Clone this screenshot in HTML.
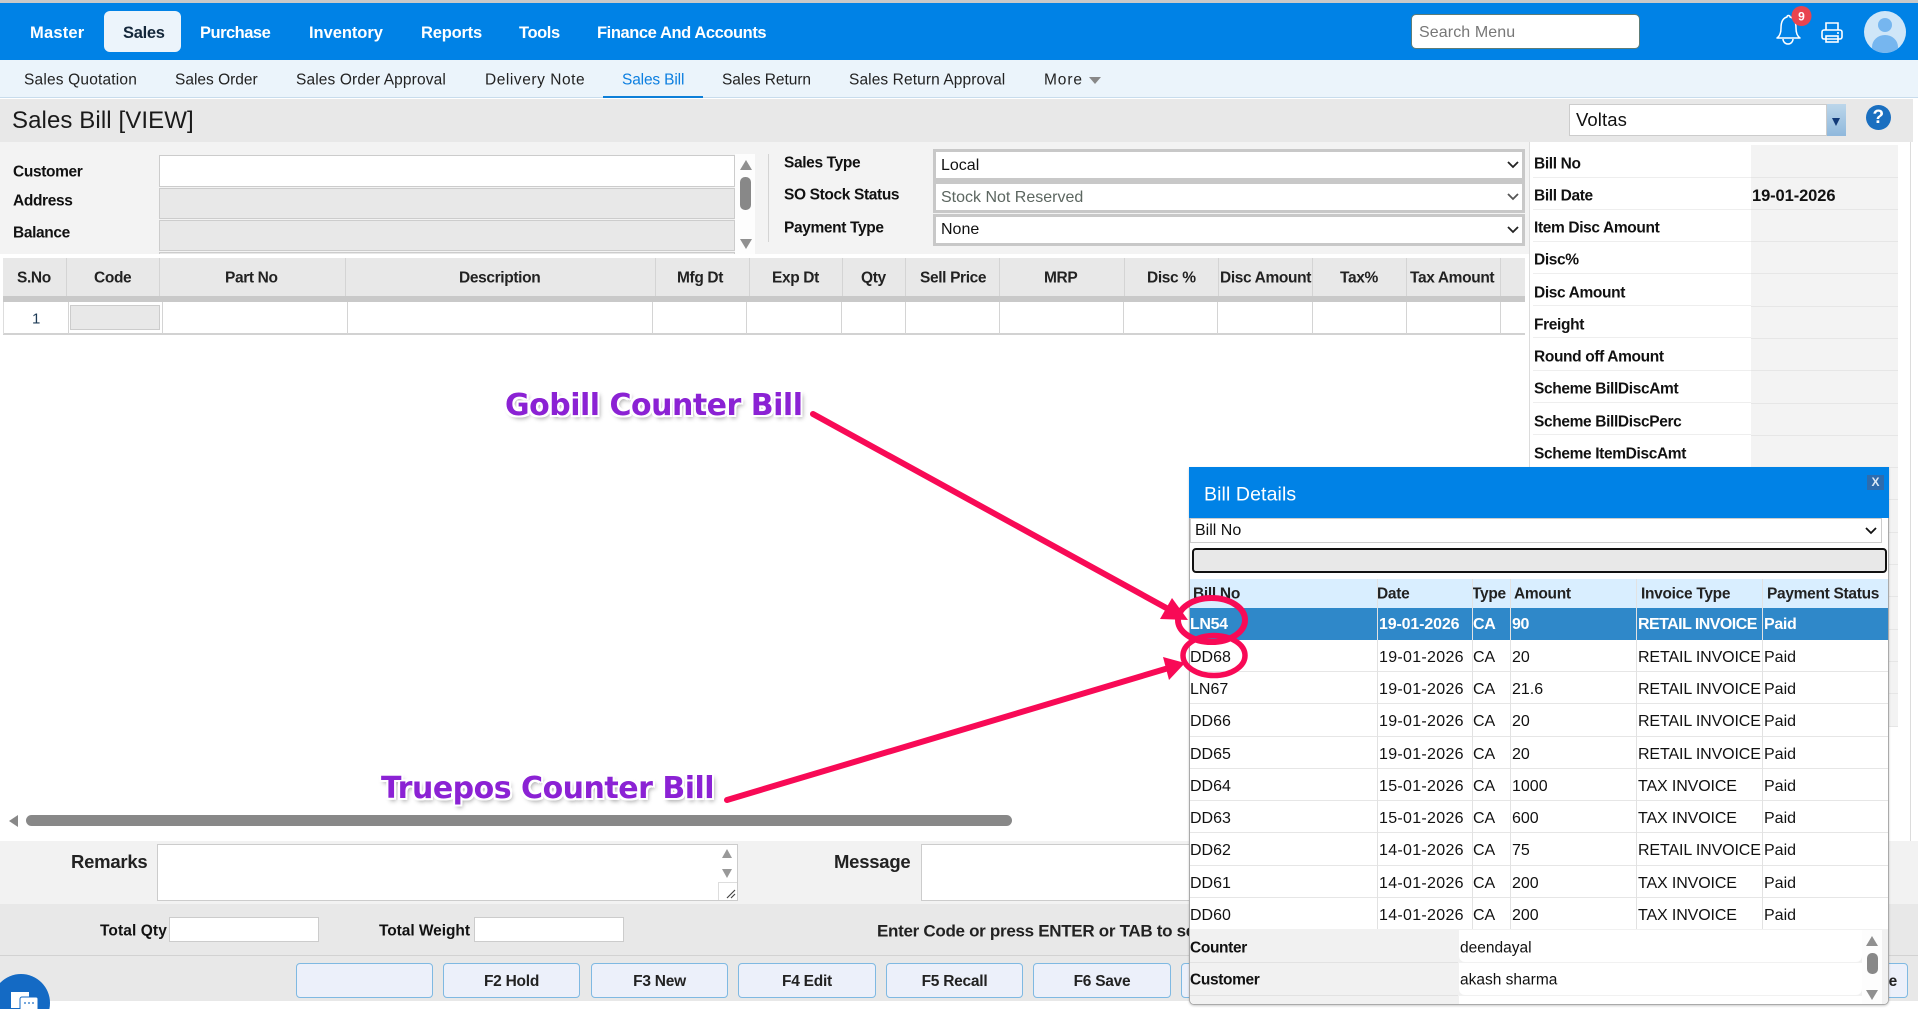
<!DOCTYPE html>
<html lang="en"><head><meta charset="utf-8"><title>Sales Bill</title>
<style>
html,body{margin:0;padding:0;width:1918px;height:1009px;overflow:hidden;background:#fff}
body{position:relative;font-family:"Liberation Sans",sans-serif;color:#111}
div,span{box-sizing:border-box}
.b{position:absolute}
.t{position:absolute;white-space:nowrap;line-height:1;transform:translateY(-50%)}
.nav{color:#fff;font-weight:bold;font-size:16.5px;top:33px}
.sub{font-size:15.5px;top:80px;color:#222;letter-spacing:.2px}
.lab{font-weight:bold;font-size:15.5px;letter-spacing:-.36px;color:#111}
.th{font-weight:bold;font-size:15.5px;top:278px;letter-spacing:-.36px;color:#222}
.vl{position:absolute;width:1px;background:#d4d4d4}
.inp{position:absolute;background:#fff;border:1px solid #ccc}
.sel{position:absolute;left:933px;width:592px;height:32px;background:#fff;border:3px solid #c8c8c8;font-size:16px;line-height:27px;padding-left:5px}
.chev{position:absolute}
.rl{position:absolute;left:1533px;width:218px;height:31px;background:#fff;border-bottom:1px solid #eee}
.rv{position:absolute;left:1751px;width:147px;height:31px;background:#f3f3f3;border-bottom:1px solid #e6e6e6}
.btn{position:absolute;top:963px;height:35px;background:#ecf0fa;border:1px solid #7fb9e2;border-radius:4px;text-align:center;font-weight:bold;font-size:15.5px;letter-spacing:-.25px;line-height:35px;color:#222}
.row{position:absolute;left:1190px;width:698px;height:32px;border-bottom:1px solid #e6e6e6;background:#fff;font-size:16px;color:#111}
.row span{position:absolute;top:9px;white-space:nowrap;line-height:18px}
.row .c1{left:0}.row .c2{left:189px;letter-spacing:.3px}.row .c3{left:283px}.row .c4{left:322px}.row .c5{left:448px;letter-spacing:-.12px}.row .c6{left:574px}
.row.s{background:#2f88c9;color:#fff;font-weight:bold;font-size:16px;letter-spacing:-.35px;border-bottom:0}
.row.s span{top:8px}
.row.s .c2{letter-spacing:-.15px}.row.s .c5{letter-spacing:-.55px}
.mh{position:absolute;top:594px;font-weight:bold;font-size:15.5px;color:#222;white-space:nowrap;line-height:1;transform:translateY(-50%);letter-spacing:-.3px}
.ann{position:absolute;white-space:nowrap;line-height:1;font-family:"DejaVu Sans",sans-serif;font-weight:bold;color:#8b22d4;font-size:30px;letter-spacing:-.5px;text-shadow:-2px 0 0 #fff,2px 0 0 #fff,0 -2px 0 #fff,0 2px 0 #fff,-2px -2px 0 #fff,2px -2px 0 #fff,-2px 2px 0 #fff,2px 2px 0 #fff,2px 3px 5px #999}
</style></head><body>

<!-- top bars -->
<div class="b" style="left:0;top:0;width:1918px;height:3px;background:#c9c9c9"></div>
<div class="b" style="left:0;top:3px;width:1918px;height:57px;background:#0082e6"></div>
<div class="b" style="left:104px;top:11px;width:77px;height:41px;background:#ecf4fb;border-radius:6px"></div>
<span class="t nav" style="left:30px;letter-spacing:.2px">Master</span>
<span class="t nav" style="left:123px;color:#14273a;letter-spacing:-.3px">Sales</span>
<span class="t nav" style="left:200px;letter-spacing:-.5px">Purchase</span>
<span class="t nav" style="left:309px;letter-spacing:-.05px">Inventory</span>
<span class="t nav" style="left:421px;letter-spacing:-.2px">Reports</span>
<span class="t nav" style="left:519px;letter-spacing:-.4px">Tools</span>
<span class="t nav" style="left:597px;letter-spacing:-.42px">Finance And Accounts</span>

<div class="b" style="left:1411px;top:14px;width:229px;height:35px;background:#fff;border:1px solid #5d7d78;border-radius:5px"></div>
<span class="t" style="left:1419px;top:33px;font-size:16px;color:#777;letter-spacing:.1px">Search Menu</span>
<svg class="b" style="left:1772px;top:5px" width="40" height="40" viewBox="0 0 40 40"><path d="M5 33c3-2 4-5 4-10 0-6 2-10 6-11 0-2 3-2 3 0 4 1 6 5 6 11 0 5 1 8 4 10z" fill="none" stroke="#fff" stroke-width="1.5" stroke-linejoin="round"/><path d="M11 33a4 4 0 0 0 10 0" fill="none" stroke="#fff" stroke-width="1.5" transform="translate(0,1)"/><circle cx="29.500" cy="11" r="10" fill="#e8444f"/><text x="29.500" y="15.500" text-anchor="middle" font-size="12" font-weight="bold" fill="#fff" font-family="Liberation Sans">9</text></svg>
<svg class="b" style="left:1820px;top:21px" width="24" height="24" viewBox="0 0 24 24" fill="none" stroke="#fff" stroke-width="1.6"><path d="M6 9V2h12v7"/><rect x="2" y="9" width="20" height="9" rx="2"/><rect x="6" y="15" width="12" height="6"/><path d="M17 12h2"/></svg>
<svg class="b" style="left:1864px;top:11px" width="42" height="42" viewBox="0 0 42 42"><defs><clipPath id="av"><circle cx="21" cy="21" r="21"/></clipPath></defs><circle cx="21" cy="21" r="21" fill="#cfe6f8"/><g clip-path="url(#av)" fill="#76b6ef"><circle cx="21" cy="14" r="7"/><ellipse cx="21" cy="36" rx="13" ry="12"/></g></svg>

<div class="b" style="left:0;top:60px;width:1918px;height:38px;background:#ebf4fb;border-bottom:1px solid #c8dcec"></div>
<span class="t sub" style="left:24px;letter-spacing:.18px">Sales Quotation</span>
<span class="t sub" style="left:175px;letter-spacing:0">Sales Order</span>
<span class="t sub" style="left:296px;letter-spacing:.13px">Sales Order Approval</span>
<span class="t sub" style="left:485px;letter-spacing:.55px">Delivery Note</span>
<span class="t sub" style="left:622px;color:#0d7fe0;letter-spacing:-.15px">Sales Bill</span>
<div class="b" style="left:603px;top:96px;width:100px;height:2px;background:#0d7fd8"></div>
<span class="t sub" style="left:722px;letter-spacing:-.05px">Sales Return</span>
<span class="t sub" style="left:849px;letter-spacing:.1px">Sales Return Approval</span>
<span class="t sub" style="left:1044px;letter-spacing:.9px">More</span>
<div class="b" style="left:1089px;top:77px;width:0;height:0;border-left:6.5px solid transparent;border-right:6.5px solid transparent;border-top:7px solid #888"></div>

<!-- title bar -->
<div class="b" style="left:0;top:99px;width:1913px;height:43px;background:#e8e8e8"></div>
<span class="t" style="left:12px;top:121px;font-size:24px;color:#1a1a1a;letter-spacing:.1px">Sales Bill [VIEW]</span>
<div class="b" style="left:1569px;top:104px;width:258px;height:32px;background:#fff;border:1px solid #ccc"></div>
<span class="t" style="left:1576px;top:120px;font-size:18.5px;color:#111;letter-spacing:.1px">Voltas</span>
<div class="b" style="left:1827px;top:104px;width:19px;height:32px;background:linear-gradient(#bcd6ea,#8fb8dc)"></div>
<div class="b" style="left:1832px;top:118px;width:0;height:0;border-left:4.5px solid transparent;border-right:4.5px solid transparent;border-top:8px solid #123a78"></div>
<div class="b" style="left:1866px;top:105px;width:24.5px;height:25px;border-radius:50%;background:#1a6fc0;color:#fff;text-align:center;font-weight:bold;font-size:19px;line-height:25px">?</div>

<!-- form -->
<div class="b" style="left:0;top:142px;width:1529px;height:112px;background:#f3f3f3"></div>
<span class="t lab" style="left:13px;top:172px">Customer</span>
<span class="t lab" style="left:13px;top:201px">Address</span>
<span class="t lab" style="left:13px;top:233px">Balance</span>
<div class="inp" style="left:159px;top:155px;width:576px;height:32px"></div>
<div class="inp" style="left:159px;top:188px;width:576px;height:31px;background:#e8e8e8"></div>
<div class="inp" style="left:159px;top:220px;width:576px;height:31px;background:#e8e8e8"></div>
<div class="inp" style="left:159px;top:252px;width:576px;height:2px;background:#e8e8e8;border-bottom:0"></div>
<div class="b" style="left:735px;top:154px;width:20px;height:100px;background:#fdfdfd"></div>
<div class="b" style="left:740px;top:160px;width:0;height:0;border-left:6px solid transparent;border-right:6px solid transparent;border-bottom:10px solid #909090"></div>
<div class="b" style="left:740px;top:177px;width:11px;height:33px;border-radius:5px;background:#888"></div>
<div class="b" style="left:740px;top:239px;width:0;height:0;border-left:6px solid transparent;border-right:6px solid transparent;border-top:10px solid #909090"></div>
<div class="vl" style="left:768px;top:154px;height:88px"></div>
<span class="t lab" style="left:784px;top:163px">Sales Type</span>
<span class="t lab" style="left:784px;top:195px">SO Stock Status</span>
<span class="t lab" style="left:784px;top:228px">Payment Type</span>
<div class="sel" style="top:149px">Local<svg class="chev" style="right:3px;top:9px" width="12" height="8" viewBox="0 0 12 8"><path d="M1 1l5 5 5-5" fill="none" stroke="#222" stroke-width="1.8"/></svg></div>
<div class="sel" style="top:181px;color:#5c6660">Stock Not Reserved<svg class="chev" style="right:3px;top:9px" width="12" height="8" viewBox="0 0 12 8"><path d="M1 1l5 5 5-5" fill="none" stroke="#555" stroke-width="1.8"/></svg></div>
<div class="sel" style="top:214px;line-height:26px">None<svg class="chev" style="right:3px;top:9px" width="12" height="8" viewBox="0 0 12 8"><path d="M1 1l5 5 5-5" fill="none" stroke="#222" stroke-width="1.8"/></svg></div>

<!-- grid -->
<div class="b" style="left:3px;top:258px;width:1522px;height:38px;background:#e8e8e8"></div>
<div class="b" style="left:3px;top:296px;width:1522px;height:6px;background:#c9c9c9"></div>
<div class="b" style="left:3px;top:333px;width:1522px;height:2px;background:#d2d2d2"></div>
<div class="b" style="left:3px;top:302px;width:1px;height:32px;background:#ddd"></div>
<div class="vl" style="left:66px;top:258px;height:38px"></div><div class="vl" style="left:159px;top:258px;height:38px"></div><div class="vl" style="left:345px;top:258px;height:38px"></div><div class="vl" style="left:655px;top:258px;height:38px"></div><div class="vl" style="left:749px;top:258px;height:38px"></div><div class="vl" style="left:842px;top:258px;height:38px"></div><div class="vl" style="left:905px;top:258px;height:38px"></div><div class="vl" style="left:999px;top:258px;height:38px"></div><div class="vl" style="left:1124px;top:258px;height:38px"></div><div class="vl" style="left:1218px;top:258px;height:38px"></div><div class="vl" style="left:1312px;top:258px;height:38px"></div><div class="vl" style="left:1406px;top:258px;height:38px"></div><div class="vl" style="left:1500px;top:258px;height:38px"></div>
<div class="vl" style="left:68px;top:302px;height:32px"></div><div class="vl" style="left:162px;top:302px;height:32px"></div><div class="vl" style="left:347px;top:302px;height:32px"></div><div class="vl" style="left:652px;top:302px;height:32px"></div><div class="vl" style="left:746px;top:302px;height:32px"></div><div class="vl" style="left:841px;top:302px;height:32px"></div><div class="vl" style="left:905px;top:302px;height:32px"></div><div class="vl" style="left:999px;top:302px;height:32px"></div><div class="vl" style="left:1123px;top:302px;height:32px"></div><div class="vl" style="left:1217px;top:302px;height:32px"></div><div class="vl" style="left:1312px;top:302px;height:32px"></div><div class="vl" style="left:1406px;top:302px;height:32px"></div><div class="vl" style="left:1500px;top:302px;height:32px"></div>
<span class="t th" style="left:17px">S.No</span><span class="t th" style="left:94px">Code</span><span class="t th" style="left:225px">Part No</span><span class="t th" style="left:459px">Description</span><span class="t th" style="left:677px">Mfg Dt</span><span class="t th" style="left:772px">Exp Dt</span><span class="t th" style="left:861px">Qty</span><span class="t th" style="left:920px">Sell Price</span><span class="t th" style="left:1044px">MRP</span><span class="t th" style="left:1147px">Disc %</span><span class="t th" style="left:1220px">Disc Amount</span><span class="t th" style="left:1340px">Tax%</span><span class="t th" style="left:1410px">Tax Amount</span>
<span class="t" style="left:32px;top:319px;font-size:15px;color:#1d3a55">1</span>
<div class="b" style="left:70px;top:305px;width:90px;height:25px;background:#e8e8e8;border:1px solid #ccc"></div>

<!-- right panel -->
<div class="b" style="left:1529px;top:142px;width:382px;height:762px;background:#fff;border:1px solid #dcdcdc;border-top:0"></div>
<div class="rl" style="top:147px"></div><div class="rv" style="top:145px;height:33px"></div>
<div class="rl" style="top:179px"></div><div class="rv" style="top:178px;height:32px"></div>
<div class="rl" style="top:211px"></div><div class="rv" style="top:210px;height:32px"></div>
<div class="rl" style="top:243px"></div><div class="rv" style="top:242px;height:32px"></div>
<div class="rl" style="top:275px"></div><div class="rv" style="top:274px;height:33px"></div>
<div class="rl" style="top:307px"></div><div class="rv" style="top:307px;height:32px"></div>
<div class="rl" style="top:340px"></div><div class="rv" style="top:339px;height:32px"></div>
<div class="rl" style="top:372px"></div><div class="rv" style="top:371px;height:33px"></div>
<div class="rl" style="top:404px"></div><div class="rv" style="top:404px;height:32px"></div>
<div class="rl" style="top:437px"></div><div class="rv" style="top:436px;height:32px"></div>
<div class="rv" style="top:468px;height:32px"></div><div class="rv" style="top:500px;height:33px"></div><div class="rv" style="top:533px;height:32px"></div><div class="rv" style="top:565px;height:32px"></div><div class="rv" style="top:597px;height:33px"></div><div class="rv" style="top:630px;height:32px"></div><div class="rv" style="top:662px;height:32px"></div><div class="rv" style="top:694px;height:33px"></div>
<span class="t lab" style="left:1534px;top:164px">Bill No</span>
<span class="t lab" style="left:1534px;top:196px">Bill Date</span>
<span class="t lab" style="left:1752px;top:196px;font-size:16.5px;letter-spacing:-.1px">19-01-2026</span>
<span class="t lab" style="left:1534px;top:228px">Item Disc Amount</span>
<span class="t lab" style="left:1534px;top:260px">Disc%</span>
<span class="t lab" style="left:1534px;top:293px">Disc Amount</span>
<span class="t lab" style="left:1534px;top:325px">Freight</span>
<span class="t lab" style="left:1534px;top:357px">Round off Amount</span>
<span class="t lab" style="left:1534px;top:389px">Scheme BillDiscAmt</span>
<span class="t lab" style="left:1534px;top:422px">Scheme BillDiscPerc</span>
<span class="t lab" style="left:1534px;top:454px">Scheme ItemDiscAmt</span>

<!-- h scrollbar -->
<div class="b" style="left:9px;top:815px;width:0;height:0;border-top:6px solid transparent;border-bottom:6px solid transparent;border-right:9px solid #888"></div>
<div class="b" style="left:26px;top:815px;width:986px;height:11px;background:#888;border-radius:6px"></div>

<!-- remarks -->
<div class="b" style="left:0;top:841px;width:1918px;height:63px;background:#f2f2f2"></div>
<span class="t" style="left:71px;top:862px;font-size:18.5px;font-weight:bold;letter-spacing:-.25px;color:#222">Remarks</span>
<div class="inp" style="left:157px;top:844px;width:581px;height:57px"></div>
<div class="b" style="left:722px;top:849px;width:0;height:0;border-left:5.5px solid transparent;border-right:5.5px solid transparent;border-bottom:9px solid #999"></div>
<div class="b" style="left:722px;top:869px;width:0;height:0;border-left:5.5px solid transparent;border-right:5.5px solid transparent;border-top:9px solid #999"></div>
<div class="b" style="left:718px;top:882px;width:19px;height:18px;background:#fff;border-left:1px solid #ddd;border-top:1px solid #ddd"></div>
<svg class="b" style="left:725px;top:888px" width="11" height="11" viewBox="0 0 11 11"><path d="M2 10L10 2M6 10l4-4" stroke="#444" stroke-width="1.2"/></svg>
<span class="t" style="left:834px;top:862px;font-size:18.5px;font-weight:bold;letter-spacing:-.25px;color:#222">Message</span>
<div class="inp" style="left:921px;top:844px;width:400px;height:57px"></div>

<!-- totals -->
<div class="b" style="left:0;top:904px;width:1918px;height:97px;background:#e8e8e8"></div>
<div class="b" style="left:0;top:955px;width:1918px;height:1px;background:#d2d2d2"></div>
<span class="t lab" style="left:100px;top:931px;letter-spacing:.1px">Total Qty</span>
<div class="inp" style="left:169px;top:917px;width:150px;height:25px"></div>
<span class="t lab" style="left:379px;top:931px;letter-spacing:-.05px">Total Weight</span>
<div class="inp" style="left:474px;top:917px;width:150px;height:25px"></div>
<span class="t" style="left:877px;top:931px;font-size:17px;font-weight:bold;letter-spacing:-.3px;color:#222">Enter Code or press ENTER or TAB to search</span>

<div class="btn" style="left:296px;width:137px"></div>
<div class="btn" style="left:443px;width:137px">F2 Hold</div>
<div class="btn" style="left:591px;width:137px">F3 New</div>
<div class="btn" style="left:738px;width:138px">F4 Edit</div>
<div class="btn" style="left:886px;width:137px">F5 Recall</div>
<div class="btn" style="left:1033px;width:138px">F6 Save</div>
<div class="btn" style="left:1181px;width:138px"></div>
<div class="btn" style="left:1770px;width:138px;text-align:right;padding-right:10px">Close</div>

<!-- chat bubble -->
<div class="b" style="left:0;top:974px;width:52px;height:35px;overflow:hidden"><div style="position:absolute;left:-8px;top:0;width:58px;height:58px;border-radius:50%;background:#146ac4"></div>
<svg style="position:absolute;left:11px;top:18px" width="28" height="17" viewBox="0 0 28 17"><path d="M0 0h18v16H0z" fill="#fff"/><rect x="9" y="5" width="18" height="14" rx="2" fill="#fff" stroke="#146ac4" stroke-width="1"/><circle cx="14" cy="11" r=".9" fill="#146ac4"/><circle cx="18" cy="11" r=".9" fill="#146ac4"/><circle cx="22" cy="11" r=".9" fill="#146ac4"/></svg></div>

<!-- modal -->
<div class="b" style="left:1189px;top:467px;width:700px;height:538px;background:#fff;border:1px solid #aaa;border-radius:0 0 5px 5px;box-shadow:0 1px 2px rgba(0,0,0,.2)"></div>
<div class="b" style="left:1189px;top:467px;width:700px;height:51px;background:#0082e6"></div>
<span class="t" style="left:1204px;top:495px;font-size:19.5px;color:#fff;letter-spacing:.1px">Bill Details</span>
<div class="b" style="left:1867px;top:475px;width:17px;height:15px;background:#2d6cae;color:#dce9f5;text-align:center;font-size:12px;font-weight:bold;line-height:15px">X</div>
<div class="b" style="left:1190px;top:518px;width:692px;height:25px;background:#fff;border:1px solid #ccc;font-size:16px;line-height:24px;padding-left:4px">Bill No<svg class="chev" style="right:4px;top:8px" width="12" height="8" viewBox="0 0 12 8"><path d="M1 1l5 5 5-5" fill="none" stroke="#111" stroke-width="1.8"/></svg></div>
<div class="b" style="left:1192px;top:548px;width:695px;height:25px;background:#e8e8e8;border:2px solid #111;border-radius:4px"></div>
<div class="b" style="left:1190px;top:579px;width:698px;height:29px;background:#d9eeff"></div>
<span class="mh" style="left:1193px">Bill No</span><span class="mh" style="left:1377px">Date</span><span class="mh" style="left:1472px">Type</span><span class="mh" style="left:1514px">Amount</span><span class="mh" style="left:1641px">Invoice Type</span><span class="mh" style="left:1767px">Payment Status</span>

<div class="row s" style="top:608px"><span class="c1">LN54</span><span class="c2">19-01-2026</span><span class="c3">CA</span><span class="c4">90</span><span class="c5">RETAIL INVOICE</span><span class="c6">Paid</span></div>
<div class="row" style="top:640px"><span class="c1">DD68</span><span class="c2">19-01-2026</span><span class="c3">CA</span><span class="c4">20</span><span class="c5">RETAIL INVOICE</span><span class="c6">Paid</span></div>
<div class="row" style="top:672px"><span class="c1">LN67</span><span class="c2">19-01-2026</span><span class="c3">CA</span><span class="c4">21.6</span><span class="c5">RETAIL INVOICE</span><span class="c6">Paid</span></div>
<div class="row" style="top:704px;height:33px"><span class="c1">DD66</span><span class="c2">19-01-2026</span><span class="c3">CA</span><span class="c4">20</span><span class="c5">RETAIL INVOICE</span><span class="c6">Paid</span></div>
<div class="row" style="top:737px"><span class="c1">DD65</span><span class="c2">19-01-2026</span><span class="c3">CA</span><span class="c4">20</span><span class="c5">RETAIL INVOICE</span><span class="c6">Paid</span></div>
<div class="row" style="top:769px"><span class="c1">DD64</span><span class="c2">15-01-2026</span><span class="c3">CA</span><span class="c4">1000</span><span class="c5">TAX INVOICE</span><span class="c6">Paid</span></div>
<div class="row" style="top:801px"><span class="c1">DD63</span><span class="c2">15-01-2026</span><span class="c3">CA</span><span class="c4">600</span><span class="c5">TAX INVOICE</span><span class="c6">Paid</span></div>
<div class="row" style="top:833px;height:33px"><span class="c1">DD62</span><span class="c2">14-01-2026</span><span class="c3">CA</span><span class="c4">75</span><span class="c5">RETAIL INVOICE</span><span class="c6">Paid</span></div>
<div class="row" style="top:866px"><span class="c1">DD61</span><span class="c2">14-01-2026</span><span class="c3">CA</span><span class="c4">200</span><span class="c5">TAX INVOICE</span><span class="c6">Paid</span></div>
<div class="row" style="top:898px;height:31px;border-bottom:0"><span class="c1">DD60</span><span class="c2">14-01-2026</span><span class="c3">CA</span><span class="c4">200</span><span class="c5">TAX INVOICE</span><span class="c6">Paid</span></div>
<div class="vl" style="left:1377px;top:579px;height:350px;background:#e2e2e2"></div><div class="vl" style="left:1472px;top:579px;height:350px;background:#e2e2e2"></div><div class="vl" style="left:1510px;top:579px;height:350px;background:#e2e2e2"></div><div class="vl" style="left:1636px;top:579px;height:350px;background:#e2e2e2"></div><div class="vl" style="left:1762px;top:579px;height:350px;background:#e2e2e2"></div>

<div class="b" style="left:1190px;top:929px;width:698px;height:75px;background:#f1f1f1;border-radius:0 0 5px 5px"></div>
<div class="b" style="left:1190px;top:962px;width:268px;height:1px;background:#e2e2e2"></div>
<div class="b" style="left:1190px;top:995px;width:268px;height:1px;background:#e2e2e2"></div>
<div class="b" style="left:1459px;top:930px;width:403px;height:32px;background:#fff;border-radius:0 0 6px 6px"></div>
<div class="b" style="left:1459px;top:963px;width:403px;height:32px;background:#fff;border-radius:0 0 6px 6px"></div>
<div class="b" style="left:1459px;top:996px;width:403px;height:8px;background:#fff"></div>
<div class="b" style="left:1862px;top:930px;width:20px;height:74px;background:#fdfdfd"></div>
<div class="b" style="left:1866px;top:936px;width:0;height:0;border-left:6.5px solid transparent;border-right:6.5px solid transparent;border-bottom:10px solid #909090"></div>
<div class="b" style="left:1867px;top:953px;width:11px;height:21px;border-radius:5px;background:#888"></div>
<div class="b" style="left:1866px;top:990px;width:0;height:0;border-left:6.5px solid transparent;border-right:6.5px solid transparent;border-top:10px solid #909090"></div>
<span class="t lab" style="left:1190px;top:948px">Counter</span>
<span class="t lab" style="left:1190px;top:980px">Customer</span>
<span class="t" style="left:1460px;top:948px;font-size:15.5px">deendayal</span>
<span class="t" style="left:1460px;top:980px;font-size:15.5px">akash sharma</span>

<!-- annotations -->
<span class="ann" style="left:505px;top:391px">Gobill Counter Bill</span>
<span class="ann" style="left:381px;top:774px">Truepos Counter Bill</span>
<svg class="b" style="left:0;top:0;pointer-events:none" width="1918" height="1009" viewBox="0 0 1918 1009">
<g fill="none" stroke="#f80a56" stroke-linecap="round">
<path d="M813 414L1170 610" stroke-width="6"/>
<path d="M727 800L1172 667" stroke-width="6"/>
<ellipse cx="1211.500" cy="620" rx="33.500" ry="22" stroke-width="6"/>
<ellipse cx="1214" cy="655.500" rx="31" ry="20" stroke-width="5.500"/>
</g>
<path d="M1188 620L1160 619 1172 598z" fill="#f80a56"/>
<path d="M1185 663L1163 657 1169 680z" fill="#f80a56"/>
</svg>
</body></html>
